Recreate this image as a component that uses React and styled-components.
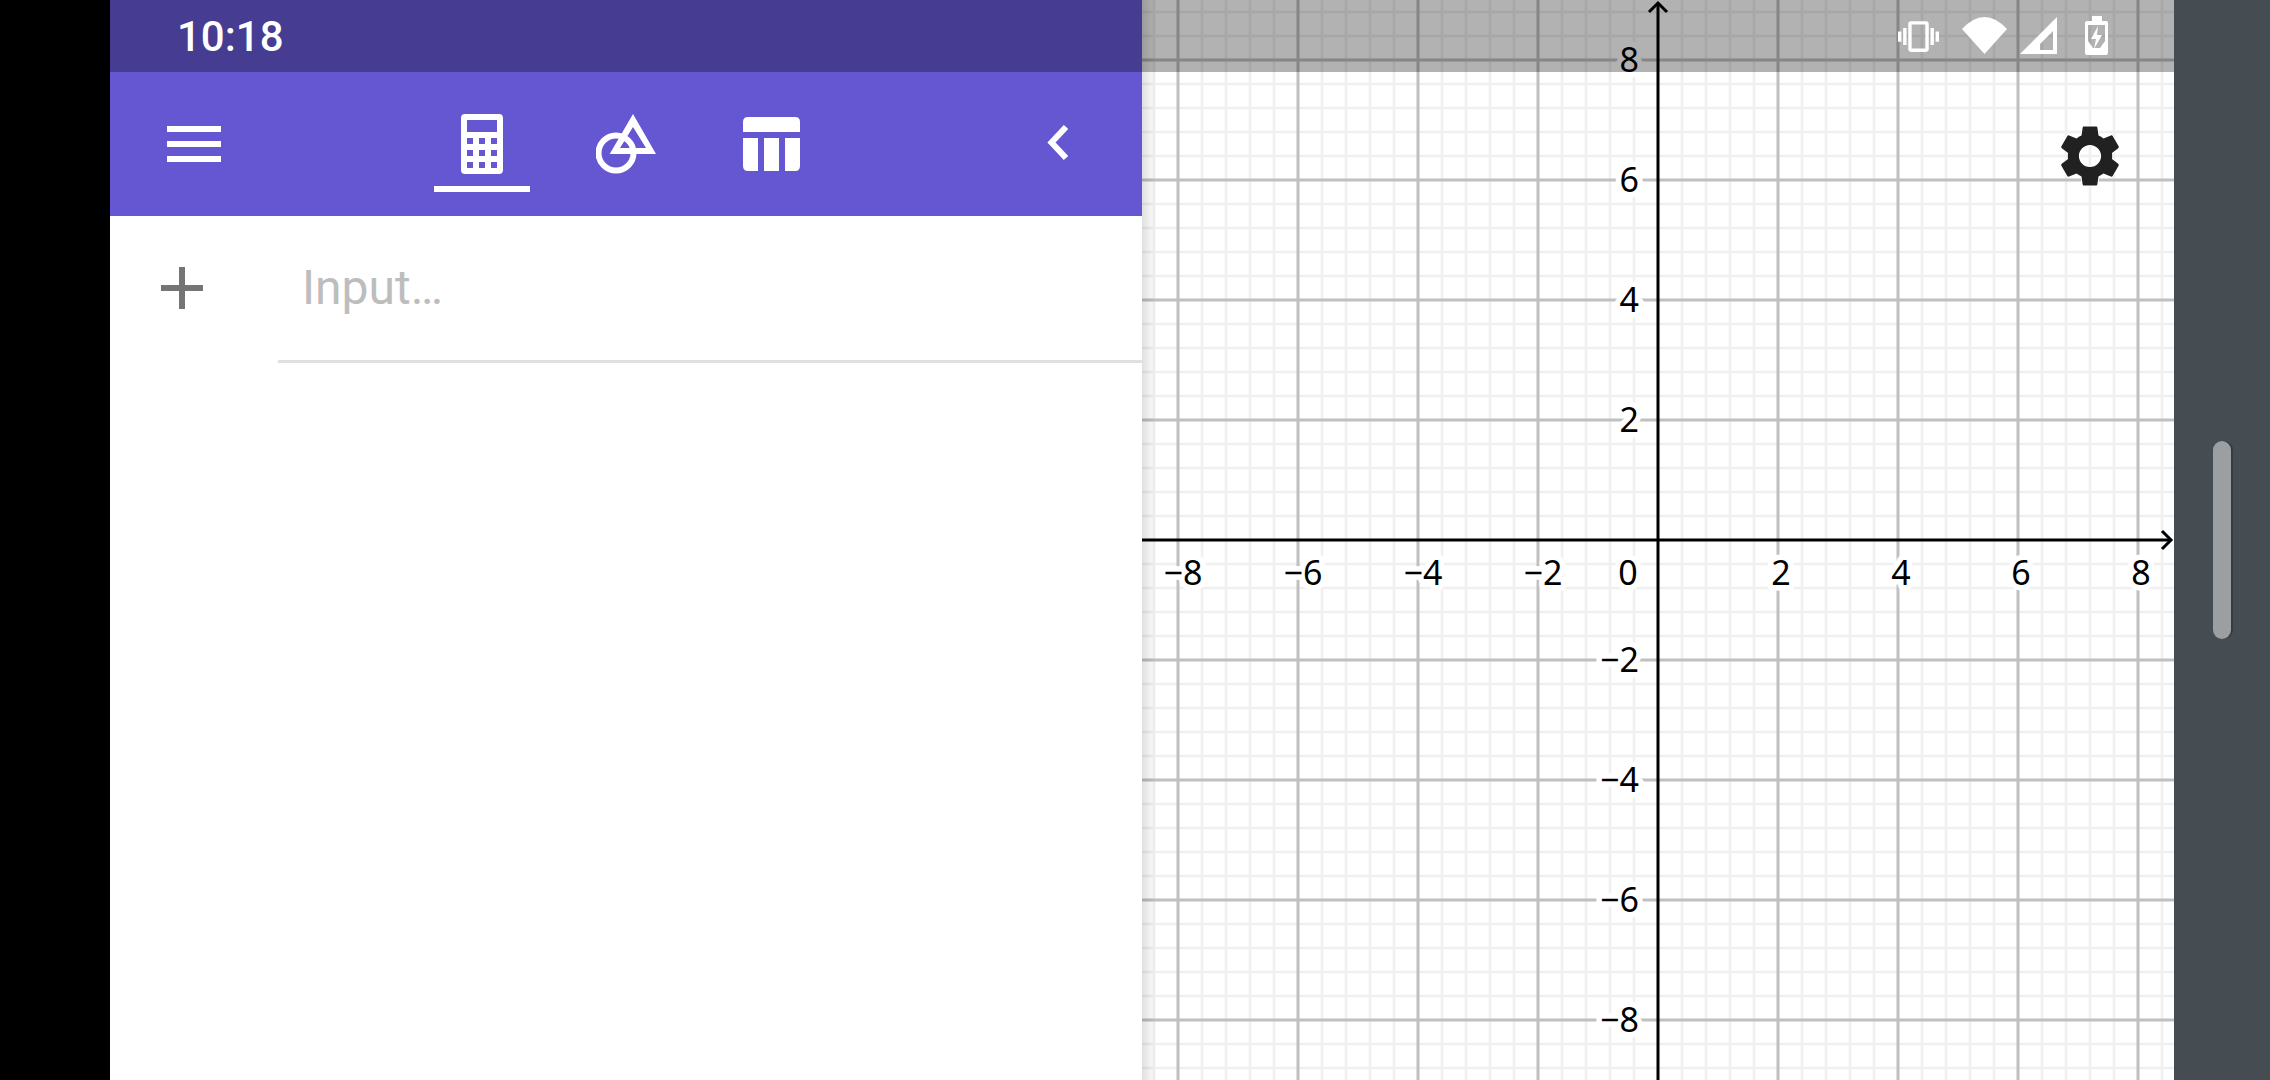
import React from "react"
import styled, { createGlobalStyle } from "styled-components"

const GlobalStyle = createGlobalStyle`
  html, body { margin: 0; padding: 0; background: #000; }
  body { font-family: Roboto, "Liberation Sans", sans-serif; }
`

const Screen = styled.div`
  display: flex;
  width: 2270px;
  height: 1080px;
  overflow: hidden;
  background: #000;
`

const Gutter = styled.div`
  width: 110px;
  flex: none;
`

const Device = styled.div`
  position: relative;
  display: flex;
  flex: 1;
`

const StatusBar = styled.div`
  position: absolute;
  top: 0;
  left: 0;
  right: 96px;
  height: 72px;
  display: flex;
  align-items: flex-start;
  padding: 0 66px 0 67px;
  box-sizing: border-box;
  background: rgba(0, 0, 0, 0.3);
  color: #fff;
  z-index: 2;
`

const Clock = styled.div`
  font-size: 42px;
  font-weight: 500;
  line-height: 74px;
  margin-right: auto;
`

const StatusIcon = styled.svg`
  display: block;
  flex: none;
  margin-left: ${(p) => p.$gap}px;
  margin-top: ${(p) => p.$top}px;
  fill: #fff;
`

const Panel = styled.section`
  width: 1032px;
  flex: none;
  background: #fff;
`

const Header = styled.header`
  display: flex;
  align-items: center;
  height: 216px;
  padding: 72px 0 0 57px;
  box-sizing: border-box;
  background: #6557d2;
`

const MenuIcon = styled.div`
  display: flex;
  flex-direction: column;
  gap: 9px;
  width: 54px;
  margin-right: 189px;
  span {
    height: 6px;
    background: #fff;
  }
`

const Tab = styled.div`
  position: relative;
  display: flex;
  justify-content: center;
  width: 144px;
  height: 144px;
  align-items: flex-start;
  padding-top: ${(p) => p.$top}px;
  box-sizing: border-box;
  svg {
    display: block;
    fill: #fff;
    margin-left: ${(p) => p.$nudge || 0}px;
  }
`

const TabLine = styled.div`
  position: absolute;
  left: 24px;
  top: 114px;
  width: 96px;
  height: 6px;
  background: #fff;
`

const Collapse = styled.svg`
  display: block;
  margin: 0 74px 3px auto;
  fill: none;
  stroke: #fff;
  stroke-width: 6;
`

const InputRow = styled.div`
  display: flex;
  height: 147px;
`

const AddCell = styled.div`
  width: 168px;
  flex: none;
  padding: 51px 0 0 51px;
  box-sizing: border-box;
  svg {
    display: block;
    fill: #757575;
  }
`

const InputField = styled.div`
  flex: 1;
  padding-left: 24px;
  border-bottom: 3px solid #e0e0e0;
  font-size: 48px;
  line-height: 144px;
  color: #bdbdbd;
`

const GraphView = styled.section`
  position: relative;
  width: 1032px;
  flex: none;
  background: #fff;
  svg {
    display: block;
  }
`

const EdgeShade = styled.div`
  position: absolute;
  top: 0;
  bottom: 0;
  left: 0;
  width: 14px;
  background: linear-gradient(to right, rgba(0, 0, 0, 0.12), rgba(0, 0, 0, 0));
`

const SettingsButton = styled.svg`
  position: absolute;
  top: 119px;
  right: 47px;
  fill: #212121;
  stroke: #fff;
  stroke-width: 0.6;
  paint-order: stroke;
`

const Label = styled.text`
  font-family: "Noto Sans", "Open Sans", sans-serif;
  font-size: 34px;
  fill: #000;
  stroke: #fff;
  stroke-width: 11px;
  stroke-linejoin: round;
  paint-order: stroke;
`

const Rail = styled.aside`
  width: 96px;
  flex: none;
  padding: 441px 0 0 39px;
  box-sizing: border-box;
  background: #454c52;
`

const RailThumb = styled.div`
  width: 18px;
  height: 198px;
  border-radius: 9px;
  background: #9b9fa1;
  box-shadow: 2px 0 0 #363b3e;
`

const GRID_LEFT = 1142
const GRID_RIGHT = 2174
const ORIGIN_X = 1658
const ORIGIN_Y = 540
const UNIT = 60
const MINOR = 24

function Grid() {
  const minorX = []
  const minorY = []
  const majorX = []
  const majorY = []
  for (let x = ORIGIN_X - MINOR * 30; x < GRID_RIGHT; x += MINOR) {
    if (x < GRID_LEFT) continue
    if ((x - ORIGIN_X) % 120 === 0) majorX.push(x)
    else minorX.push(x)
  }
  for (let y = ORIGIN_Y - MINOR * 30; y < 1080; y += MINOR) {
    if (y < 0) continue
    if ((y - ORIGIN_Y) % 120 === 0) majorY.push(y)
    else minorY.push(y)
  }
  const ticks = [-8, -6, -4, -2, 2, 4, 6, 8]

  return (
    <svg width="1032" height="1080" viewBox={`${GRID_LEFT} 0 1032 1080`}>
      <g stroke="#f0f0f0" strokeWidth="2.5">
        {minorX.map((x) => <line key={x} x1={x} x2={x} y1="0" y2="1080" />)}
        {minorY.map((y) => <line key={y} x1={GRID_LEFT} x2={GRID_RIGHT} y1={y} y2={y} />)}
      </g>
      <g stroke="#c0c0c0" strokeWidth="3">
        {majorX.filter((x) => x !== ORIGIN_X).map((x) => <line key={x} x1={x} x2={x} y1="0" y2="1080" />)}
        {majorY.filter((y) => y !== ORIGIN_Y).map((y) => <line key={y} x1={GRID_LEFT} x2={GRID_RIGHT} y1={y} y2={y} />)}
      </g>
      <g stroke="#000" strokeWidth="3" fill="none">
        <line x1={GRID_LEFT} x2="2171" y1={ORIGIN_Y} y2={ORIGIN_Y} />
        <line x1={ORIGIN_X} x2={ORIGIN_X} y1="3" y2="1080" />
        <path d="M2162 531 L2171 540 L2162 549" />
        <path d="M1649 12 L1658 3 L1667 12" />
      </g>
      {ticks.map((t) => (
        <Label
          key={`x${t}`}
          x={ORIGIN_X + t * UNIT + (t < 0 ? 5 : 3)}
          y={585}
          textAnchor="middle"
        >
          {t < 0 ? `\u2212${-t}` : t}
        </Label>
      ))}
      <Label x={1628} y={585} textAnchor="middle">0</Label>
      {ticks.map((t) => (
        <Label key={`y${t}`} x={1639} y={ORIGIN_Y - t * UNIT + 12} textAnchor="end">
          {t < 0 ? `\u2212${-t}` : t}
        </Label>
      ))}
    </svg>
  )
}

export default function App() {
  return (
    <Screen>
      <GlobalStyle />
      <Gutter />
      <Device>
        <StatusBar>
          <Clock>10:18</Clock>
          <StatusIcon $gap={0} $top={16} width="41" height="41" viewBox="0 0 24 24">
            <path d="M0 15h2V9H0v6zm3 2h2V7H3v10zm19-8v6h2V9h-2zm-3 8h2V7h-2v10zM16.5 3h-9C6.67 3 6 3.67 6 4.5v15c0 .83.67 1.5 1.5 1.5h9c.83 0 1.5-.67 1.5-1.5v-15c0-.83-.67-1.5-1.5-1.5zM16 19H8V5h8v14z" />
          </StatusIcon>
          <StatusIcon $gap={23} $top={17} width="45" height="37" viewBox="0 0 45 37">
            <path d="M0 12 Q22.5 -12 45 12 L22.5 37 Z" />
          </StatusIcon>
          <StatusIcon $gap={13} $top={17} width="37" height="37" viewBox="0 0 37 37">
            <path fillRule="evenodd" d="M0 37 L37 0 V37 Z M20 33 H33 V14 L20 27 Z" />
          </StatusIcon>
          <StatusIcon $gap={28} $top={16} width="23" height="39" viewBox="0 0 23 39">
            <path fillRule="evenodd" d="M7 0 H17 V5 H21 Q23 5 23 7 V37 Q23 39 21 39 H2 Q0 39 0 37 V7 Q0 5 2 5 H7 Z M3 9 V25 L8 32 H15 L20 25 V9 Z" />
            <path d="M13 10 L6 23 H11 L9 33 L17 19 H12 Z" />
          </StatusIcon>
        </StatusBar>

        <Panel>
          <Header>
            <MenuIcon>
              <span />
              <span />
              <span />
            </MenuIcon>
            <Tab $top={42}>
              <svg width="42" height="60" viewBox="0 0 42 60">
                <path
                  fillRule="evenodd"
                  d="M4 0 H38 Q42 0 42 4 V56 Q42 60 38 60 H4 Q0 60 0 56 V4 Q0 0 4 0 Z M6 6 V18 H36 V6 Z M6 24 V30 H12 V24 Z M18 24 V30 H24 V24 Z M30 24 V30 H36 V24 Z M6 36 V42 H12 V36 Z M18 36 V42 H24 V36 Z M30 36 V42 H36 V36 Z M6 48 V54 H12 V48 Z M18 48 V54 H24 V48 Z M30 48 V54 H36 V48 Z"
                />
              </svg>
              <TabLine />
            </Tab>
            <Tab $top={42}>
              <svg width="60" height="60" viewBox="0 0 60 60">
                <path fillRule="evenodd" d="M37 0 L60 40 H13.7 Z M37 13 L24 34 H50 Z" />
                <circle cx="20" cy="39" r="17.5" fill="none" stroke="#fff" strokeWidth="6" />
              </svg>
            </Tab>
            <Tab $top={45} $nudge={3}>
              <svg width="57" height="54" viewBox="0 0 57 54">
                <path d="M5 0 H52 Q57 0 57 5 V15 H0 V5 Q0 0 5 0 Z" />
                <path d="M0 21 H15 V54 H5 Q0 54 0 49 Z" />
                <rect x="21" y="21" width="15" height="33" />
                <path d="M42 21 H57 V49 Q57 54 52 54 H42 Z" />
              </svg>
            </Tab>
            <Collapse width="21" height="36" viewBox="0 0 21 36">
              <path d="M19 2 L4.5 17.5 L19 33" />
            </Collapse>
          </Header>
          <InputRow>
            <AddCell>
              <svg width="42" height="42" viewBox="0 0 42 42">
                <path d="M18 0 H24 V18 H42 V24 H24 V42 H18 V24 H0 V18 H18 Z" />
              </svg>
            </AddCell>
            <InputField>Input…</InputField>
          </InputRow>
        </Panel>

        <GraphView>
          <Grid />
          <EdgeShade />
          <SettingsButton width="74" height="74" viewBox="0 0 24 24">
            <path d="M19.14 12.94c.04-.3.06-.61.06-.94 0-.32-.02-.64-.07-.94l2.03-1.58c.18-.14.23-.41.12-.61l-1.92-3.32c-.12-.22-.37-.29-.59-.22l-2.39.96c-.5-.38-1.03-.7-1.62-.94l-.36-2.54c-.04-.24-.24-.41-.48-.41h-3.84c-.24 0-.43.17-.47.41l-.36 2.54c-.59.24-1.13.57-1.62.94l-2.39-.96c-.22-.08-.47 0-.59.22L2.74 8.87c-.12.21-.08.47.12.61l2.03 1.58c-.05.3-.09.63-.09.94s.02.64.07.94l-2.03 1.58c-.18.14-.23.41-.12.61l1.92 3.32c.12.22.37.29.59.22l2.39-.96c.5.38 1.03.7 1.62.94l.36 2.54c.05.24.24.41.48.41h3.84c.24 0 .44-.17.47-.41l.36-2.54c.59-.24 1.13-.56 1.62-.94l2.39.96c.22.08.47 0 .59-.22l1.92-3.32c.12-.22.07-.47-.12-.61l-2.01-1.58zM12 15.6c-1.98 0-3.6-1.62-3.6-3.6s1.62-3.6 3.6-3.6 3.6 1.62 3.6 3.6-1.62 3.6-3.6 3.6z" />
          </SettingsButton>
        </GraphView>

        <Rail>
          <RailThumb />
        </Rail>
      </Device>
    </Screen>
  )
}
